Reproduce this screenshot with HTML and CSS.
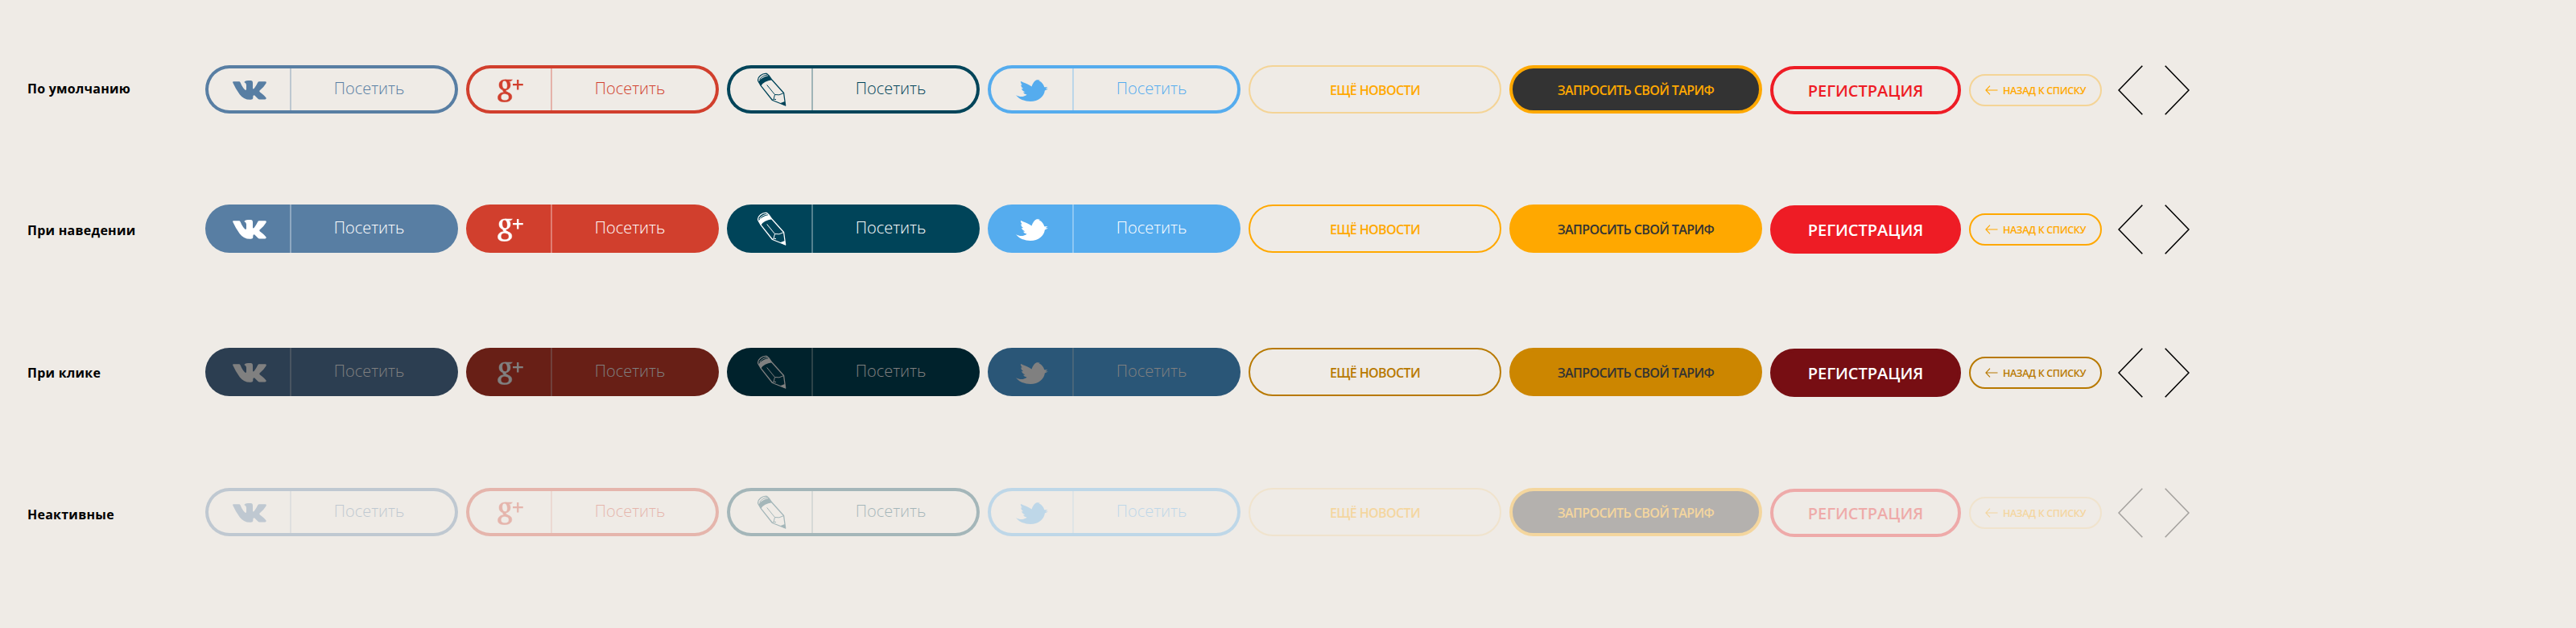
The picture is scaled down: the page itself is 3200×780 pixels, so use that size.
FILE: index.html
```
<!DOCTYPE html>
<html lang="ru">
<head>
<meta charset="utf-8">
<title>Кнопки</title>
<link rel="stylesheet" href="styles.css">
</head>
<body>
<svg class="sprite" aria-hidden="true">
  <symbol id="vk" viewBox="0 0 42 24"><path d="M1 1.2H8Q9 1.2 9.6 2.6Q12.5 9.5 15.5 11.8Q17 12.4 17 10.5V5.5Q17 3 14.3 2Q15.500 0 19 0H22.500Q25 .2 25 3V9.500Q25.300 11.500 27 9.500Q29.500 6 31.200 2.500Q31.800 1.300 33 1.300H40.500Q42.500 1.300 41.500 3.500Q39 8 33.500 12.500Q33 13.500 34 14.500Q40 19 41.600 21.600Q42 23.300 40.300 23.400H33.500Q32.200 23.400 31.300 22.400L27.300 18.600Q25.600 17.600 25.300 20V22Q25.200 23.700 22.500 23.800Q14 24.300 8.700 17.300Q4 11 .3 2.800Q-.3 1.300 1 1.200Z"/></symbol>
  <symbol id="gplus" viewBox="0 0 32 29">
    <g stroke="currentColor" stroke-width=".5">
    <path fill-rule="evenodd" d="M9.200 1C13.500 1 16 3.500 16 7.500S13.300 14 9 14S2 11.500 2 7.500S4.700 1 9.200 1ZM8.700 2.200C6.700 2.200 5.800 4 5.800 6.800C5.800 10.300 7.300 12.800 9.500 12.800C11.600 12.800 12.300 11 12.300 8.300C12.300 4.800 11 2.200 8.700 2.200Z"/>
    <path fill-rule="evenodd" d="M9 16.500C14.500 16.500 17.800 18.500 17.800 22.300C17.800 26.500 14 28.700 8.700 28.700C3.700 28.700 .5 27 .5 23.300C.5 19.300 3.800 16.500 9 16.500ZM9.300 18.300C6 18.300 4.200 20 4.200 22.800C4.200 25.400 6 26.800 9.200 26.800C12.500 26.800 14.200 25.400 14.200 22.800C14.200 20 12.400 18.300 9.300 18.300Z"/>
    <path d="M9 1H18.500L16.500 2.800H11ZM7.500 12.500L11 13Q9.800 14.200 10.500 15.200L14.500 18L11 19L7.500 16.200Q5.800 14.500 7.500 12.500Z"/>
    </g>
    <path d="M24.100 1H26.400V6H31.800V8.300H26.400V13.400H24.100V8.300H19V6H24.100Z"/>
  </symbol>
  <symbol id="pencil" viewBox="0 0 37 42">
    <path d="M2.300 11.500Q6 5.500 15 4L19 9.300Q9 10.500 5.300 16.700Z"/>
    <g fill="none" stroke="currentColor" stroke-width="1.300" stroke-linejoin="round"><path d="M5.300 16.700L1.900 10.800C.3 5.500 7.500 .3 12.500 1.500L15.500 4.300L19 9.300L33.600 25.500L35.700 41L19.500 34.500Z"/><path stroke-width="1" d="M12.700 15.500L22.500 27.500L21 33.300M22.500 27.500Q28 29 33 25.800M19.500 34.500Q21 32.500 24 33.500M3.700 9Q6 4 13.500 3"/></g>
    <path d="M29 38.300L34.800 36L36 41.500Z"/>
  </symbol>
  <symbol id="bird" viewBox="0 0 40 28"><path d="M6 3C10 5 15.500 6 19.500 9.500C21 6 22.500 2.500 26 1.300L27.500 .8L27 1.800L29.500 .9L28.700 2.300C32.500 4 34.300 7 35.300 10.300L39.500 10.200L36.700 12.300L40 12.600L35.900 14.500C35 22 28 28 18 28C11 28 4 25.500 0 20C4 22.500 8 22.500 10.500 21.200Q13 20.500 13.500 19.500Q10 19 9 16.800L11.500 16.500Q7.500 14.800 7 12L9.300 12.300Q5.500 9.500 6.600 7.300L7.800 7.500Q5.500 5 6 3Z"/></symbol>
  <symbol id="back" viewBox="0 0 16 12"><path fill="none" stroke="currentColor" stroke-width="1.100" d="M6 .6L.9 6L6 11.400M.9 6H15.500"/></symbol>
  <symbol id="prev" viewBox="0 0 31 62"><path fill="none" stroke="currentColor" stroke-width="1.600" d="M30.300 .7L1 31L30.300 61.300"/></symbol>
  <symbol id="next" viewBox="0 0 31 62"><path fill="none" stroke="currentColor" stroke-width="1.600" d="M.7 .7L30 31L.7 61.300"/></symbol>
</svg>
<main class="states">
  <section class="state normal">
    <h2 class="state-name">По умолчанию</h2>
    <div class="buttons">
      <a class="btn social vk"><span class="mark"><svg class="i-vk"><use href="#vk"/></svg></span><span class="visit">Посетить</span></a>
      <a class="btn social google"><span class="mark"><svg class="i-gplus"><use href="#gplus"/></svg></span><span class="visit">Посетить</span></a>
      <a class="btn social blog"><span class="mark"><svg class="i-pencil"><use href="#pencil"/></svg></span><span class="visit">Посетить</span></a>
      <a class="btn social twitter"><span class="mark"><svg class="i-bird"><use href="#bird"/></svg></span><span class="visit">Посетить</span></a>
      <a class="btn more">ЕЩЁ НОВОСТИ</a>
      <a class="btn tariff">ЗАПРОСИТЬ СВОЙ ТАРИФ</a>
      <a class="btn register">РЕГИСТРАЦИЯ</a>
      <a class="btn return"><svg class="i-back"><use href="#back"/></svg><span>НАЗАД К СПИСКУ</span></a>
      <div class="arrows"><svg><use href="#prev"/></svg><svg><use href="#next"/></svg></div>
    </div>
  </section>
  <section class="state hover">
    <h2 class="state-name">При наведении</h2>
    <div class="buttons">
      <a class="btn social vk"><span class="mark"><svg class="i-vk"><use href="#vk"/></svg></span><span class="visit">Посетить</span></a>
      <a class="btn social google"><span class="mark"><svg class="i-gplus"><use href="#gplus"/></svg></span><span class="visit">Посетить</span></a>
      <a class="btn social blog"><span class="mark"><svg class="i-pencil"><use href="#pencil"/></svg></span><span class="visit">Посетить</span></a>
      <a class="btn social twitter"><span class="mark"><svg class="i-bird"><use href="#bird"/></svg></span><span class="visit">Посетить</span></a>
      <a class="btn more">ЕЩЁ НОВОСТИ</a>
      <a class="btn tariff">ЗАПРОСИТЬ СВОЙ ТАРИФ</a>
      <a class="btn register">РЕГИСТРАЦИЯ</a>
      <a class="btn return"><svg class="i-back"><use href="#back"/></svg><span>НАЗАД К СПИСКУ</span></a>
      <div class="arrows"><svg><use href="#prev"/></svg><svg><use href="#next"/></svg></div>
    </div>
  </section>
  <section class="state active">
    <h2 class="state-name">При клике</h2>
    <div class="buttons">
      <a class="btn social vk"><span class="mark"><svg class="i-vk"><use href="#vk"/></svg></span><span class="visit">Посетить</span></a>
      <a class="btn social google"><span class="mark"><svg class="i-gplus"><use href="#gplus"/></svg></span><span class="visit">Посетить</span></a>
      <a class="btn social blog"><span class="mark"><svg class="i-pencil"><use href="#pencil"/></svg></span><span class="visit">Посетить</span></a>
      <a class="btn social twitter"><span class="mark"><svg class="i-bird"><use href="#bird"/></svg></span><span class="visit">Посетить</span></a>
      <a class="btn more">ЕЩЁ НОВОСТИ</a>
      <a class="btn tariff">ЗАПРОСИТЬ СВОЙ ТАРИФ</a>
      <a class="btn register">РЕГИСТРАЦИЯ</a>
      <a class="btn return"><svg class="i-back"><use href="#back"/></svg><span>НАЗАД К СПИСКУ</span></a>
      <div class="arrows"><svg><use href="#prev"/></svg><svg><use href="#next"/></svg></div>
    </div>
  </section>
  <section class="state disabled">
    <h2 class="state-name">Неактивные</h2>
    <div class="buttons">
      <a class="btn social vk"><span class="mark"><svg class="i-vk"><use href="#vk"/></svg></span><span class="visit">Посетить</span></a>
      <a class="btn social google"><span class="mark"><svg class="i-gplus"><use href="#gplus"/></svg></span><span class="visit">Посетить</span></a>
      <a class="btn social blog"><span class="mark"><svg class="i-pencil"><use href="#pencil"/></svg></span><span class="visit">Посетить</span></a>
      <a class="btn social twitter"><span class="mark"><svg class="i-bird"><use href="#bird"/></svg></span><span class="visit">Посетить</span></a>
      <a class="btn more">ЕЩЁ НОВОСТИ</a>
      <a class="btn tariff">ЗАПРОСИТЬ СВОЙ ТАРИФ</a>
      <a class="btn register">РЕГИСТРАЦИЯ</a>
      <a class="btn return"><svg class="i-back"><use href="#back"/></svg><span>НАЗАД К СПИСКУ</span></a>
      <div class="arrows"><svg><use href="#prev"/></svg><svg><use href="#next"/></svg></div>
    </div>
  </section>
</main>
</body>
</html>
```
FILE: styles.css
```
* { box-sizing: border-box; }
body { margin: 0; background: #efebe6; font-family: "Open Sans", "Noto Sans", sans-serif; color: #000; }
.sprite { display: none; }
svg { display: block; fill: currentColor; flex: none; }
.states { height: 780px; padding: 81px 0 0 34px; }
.state { display: flex; align-items: flex-start; height: 173px; }
.state.hover { height: 178px; }
.state.active { height: 174px; }
.state.disabled { height: 90px; }
.state-name { width: 221px; margin: 0; padding-top: 18px; font-size: 16px; line-height: 22px; font-weight: 700; letter-spacing: .25px; }
.hover .state-name { padding-top: 21px; }
.active .state-name { padding-top: 20px; }
.disabled .state-name { padding-top: 22px; }
.buttons { display: flex; gap: 10px; align-items: flex-start; }

.btn { display: flex; align-items: center; justify-content: center; width: 314px; height: 60px; border: 4px solid var(--c); border-radius: 30px; color: var(--c); white-space: nowrap; }
.vk { --c: #587ea3; }
.google { --c: #d13f2d; }
.blog { --c: #004459; }
.twitter { --c: #55acee; }
.more, .tariff, .return { --c: #ffa800; }
.register { --c: #ee1c25; }

.social { position: relative; overflow: hidden; justify-content: flex-start; border: 0; box-shadow: inset 0 0 0 4px var(--c); }
.mark { width: 107px; height: 52px; display: flex; align-items: center; padding-left: 34px; border-right: 2px solid color-mix(in srgb, var(--c) 33%, #efebe6); }
.google .mark { padding-left: 39px; }
.blog .mark { padding-left: 37px; }
.twitter .mark { padding-left: 35px; }
.i-vk { width: 42px; height: 24px; margin-top: 1px; }
.i-gplus { width: 32px; height: 29px; margin-top: 3px; }
.i-pencil { width: 37px; height: 42px; }
.i-bird { width: 40px; height: 28px; margin-top: 2px; }
.visit { flex: 1; padding-right: 14px; text-align: center; font-size: 20px; line-height: 28px; font-weight: 300; margin-top: -3px; }

.more, .tariff { font-size: 16px; line-height: 20px; font-weight: 600; letter-spacing: -.6px; padding-top: 2px; }
.more { border-width: 2px; border-color: rgba(255, 168, 0, .35); }
.tariff { background: #333; }
.register { width: 237px; margin-top: 1px; font-size: 20px; font-weight: 600; }
.return { width: 165px; height: 40px; margin-top: 11px; border-width: 2px; border-color: rgba(255, 168, 0, .35); font-size: 12.5px; font-weight: 600; letter-spacing: -.35px; gap: 6px; }
.i-back { width: 16px; height: 12px; }
.arrows { display: flex; gap: 27px; margin-left: 10px; }
.arrows svg { width: 31px; height: 62px; }

.hover .social, .active .social { background: var(--c); box-shadow: none; color: #fff; }
.hover .mark, .active .mark { height: 60px; border-color: rgba(255, 255, 255, .33); }
.hover .more, .hover .return { border-color: #ffa800; }
.hover .tariff { background: #ffa800; color: #333; }
.hover .register { background: #ee1c25; color: #fff; }

.active .vk { --c: #2c3e51; }
.active .google { --c: #681f16; }
.active .blog { --c: #00222c; }
.active .twitter { --c: #2a5677; }
.active .social { color: #808080; }
.active .mark { border-color: rgba(128, 128, 128, .35); }
.active .more, .active .return { --c: #b87900; border-color: var(--c); }
.active .tariff { --c: #cc8600; background: #cc8600; color: #333; }
.active .register { --c: #770e13; background: #770e13; color: #fff; }

.disabled .btn, .disabled .arrows { opacity: .31; }
```
